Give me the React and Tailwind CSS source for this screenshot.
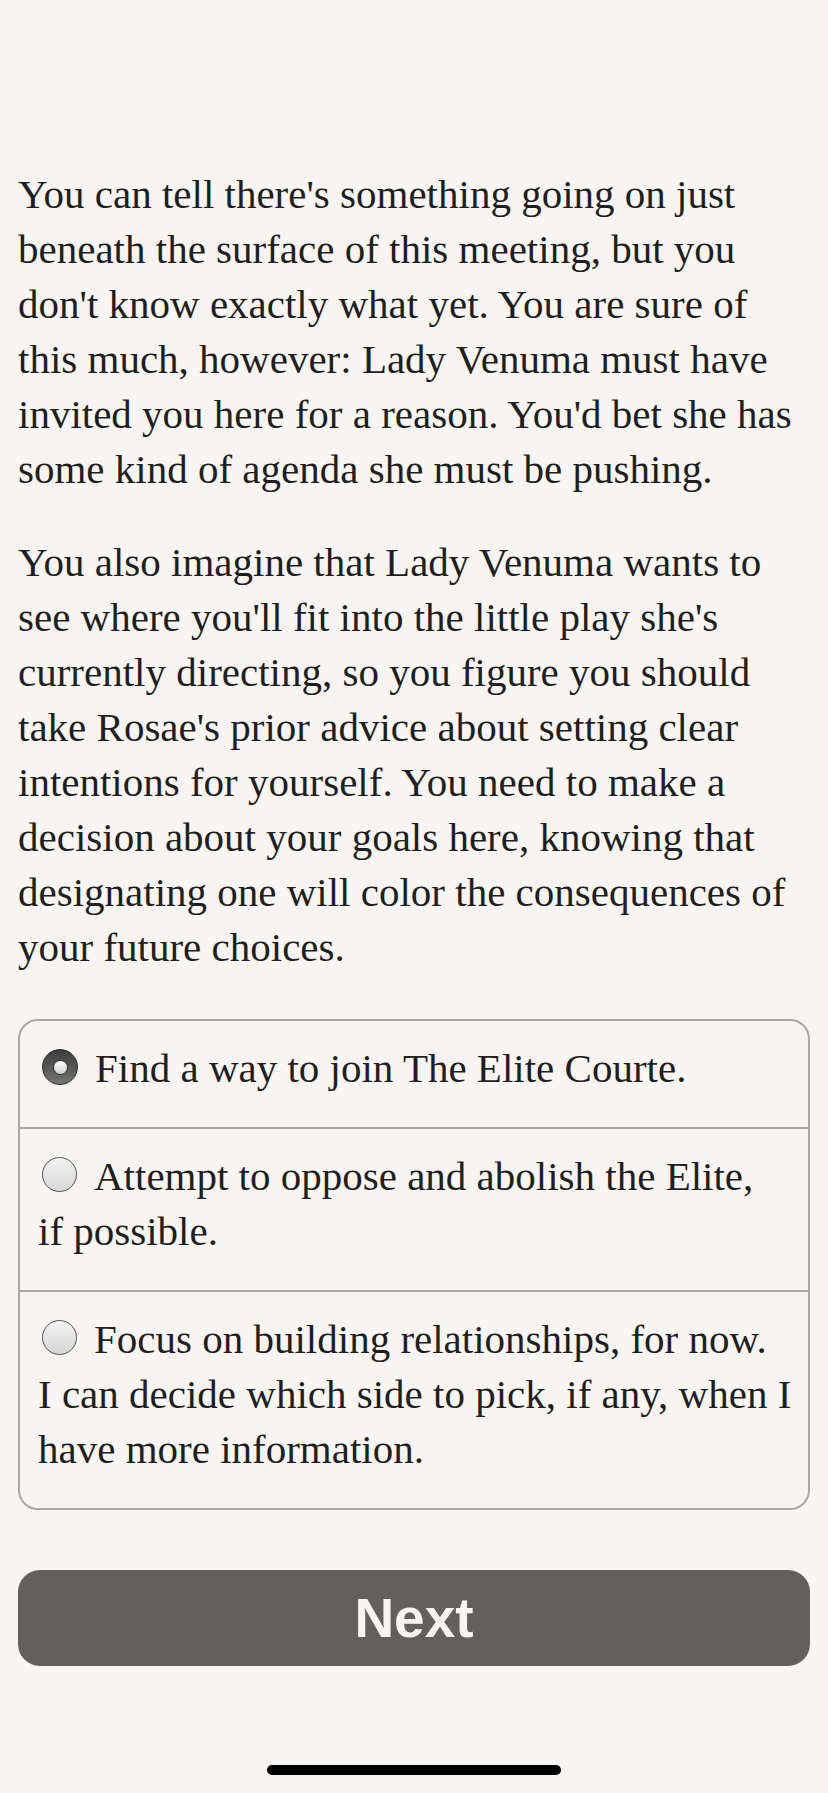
import React from 'react';

const para1 = [
    "You can tell there's something going on just",
    'beneath the surface of this meeting, but you',
    "don't know exactly what yet. You are sure of",
    'this much, however: Lady Venuma must have',
    "invited you here for a reason. You'd bet she has",
    'some kind of agenda she must be pushing.',
];

const para2 = [
    'You also imagine that Lady Venuma wants to',
    "see where you'll fit into the little play she's",
    'currently directing, so you figure you should',
    "take Rosae's prior advice about setting clear",
    'intentions for yourself. You need to make a',
    'decision about your goals here, knowing that',
    'designating one will color the consequences of',
    'your future choices.',
];

const options = [
    { id: 1, lines: ['Find a way to join The Elite Courte.'] },
    { id: 2, lines: ['Attempt to oppose and abolish the Elite,', 'if possible.'] },
    {
        id: 3,
        lines: [
            'Focus on building relationships, for now.',
            'I can decide which side to pick, if any, when I',
            'have more information.',
        ],
    },
];

const Radio = ({ checked }) =>
    checked ? (
        <span className="relative inline-block w-[36px] h-[36px] rounded-full align-[-3px] ml-[4px] mr-[17px] border-[1.5px] border-[#2a2a2a] bg-gradient-to-b from-[#3c3c3c] to-[#747474]">
            <span className="absolute inset-0 m-auto w-[15px] h-[15px] rounded-full border border-[#333333] bg-gradient-to-b from-[#ffffff] to-[#cfcfcf]"></span>
        </span>
    ) : (
        <span className="inline-block w-[35px] h-[35px] rounded-full align-[-2px] ml-[4px] mr-[17px] border-[1.5px] border-[#555555] bg-gradient-to-b from-[#f4f4f4] to-[#d6d6d6]"></span>
    );

const Lines = ({ lines }) =>
    lines.map((l, i) => (
        <div key={i} className="whitespace-nowrap">
            {l}
        </div>
    ));

const App = () => {
    const [selected, setSelected] = React.useState(1);

    return (
        <div
            className="min-h-[1793px] bg-[#f7f4f1] text-[#1f1f1f] px-[18px] pt-[167px] flex flex-col"
            style={{ fontFamily: '"Liberation Serif", "Times New Roman", serif' }}
        >
            <div className="text-[41px] leading-[55px]">
                <Lines lines={para1} />
            </div>
            <div className="text-[41px] leading-[55px] mt-[38px]">
                <Lines lines={para2} />
            </div>

            {/* Choices */}
            <div className="mt-[44px] border-2 border-[#a8a8a8] rounded-[20px] overflow-hidden">
                {options.map((opt, idx) => (
                    <div
                        key={opt.id}
                        onClick={() => setSelected(opt.id)}
                        className={`px-[18px] pt-[20px] pb-[31px] text-[41px] leading-[55px] cursor-pointer ${idx < options.length - 1 ? 'border-b-2 border-[#a8a8a8]' : ''}`}
                    >
                        {opt.lines.map((l, i) => (
                            <div key={i} className="whitespace-nowrap">
                                {i === 0 && <Radio checked={selected === opt.id} />}
                                {l}
                            </div>
                        ))}
                    </div>
                ))}
            </div>

            <button
                className="mt-[60px] h-[96px] w-full rounded-[22px] bg-[#625f5c] text-[#f7f4f1] text-[55px] font-bold"
                style={{ fontFamily: '"Liberation Sans", Arial, sans-serif' }}
            >
                Next
            </button>

            <div className="mt-[99px] mx-auto w-[294px] h-[10px] rounded-full bg-black"></div>
        </div>
    );
};

export default App;
